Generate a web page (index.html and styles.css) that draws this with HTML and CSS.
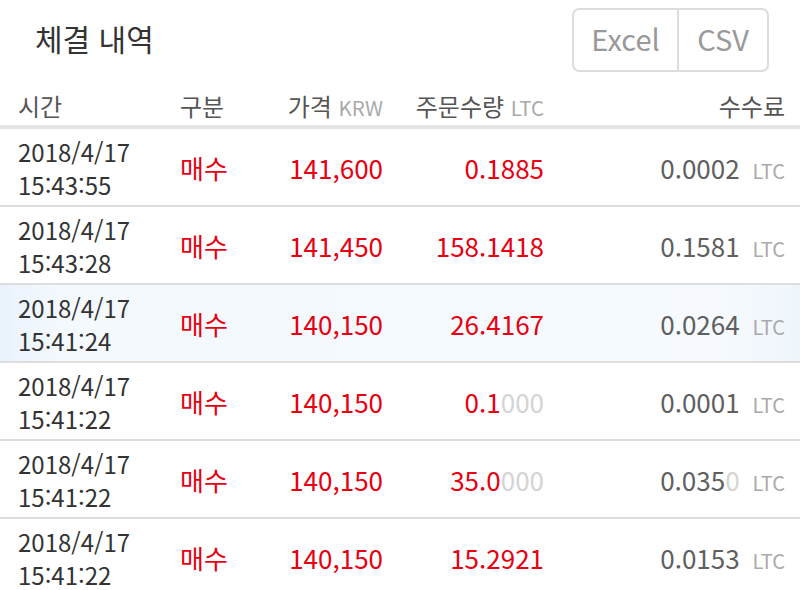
FILE: index.html
```html
<!DOCTYPE html>
<html lang="ko">
<head>
<meta charset="utf-8">
<link rel="stylesheet" href="styles.css">
</head>
<body>
<div class="top">
  <h1 class="title">체결 내역</h1>
  <div class="btns">
    <button class="btn btn-excel">Excel</button>
    <button class="btn btn-csv">CSV</button>
  </div>
</div>
<div class="thead">
  <div class="c1">시간</div>
  <div class="c2">구분</div>
  <div class="c3">가격 <span class="unit">KRW</span></div>
  <div class="c4">주문수량 <span class="unit">LTC</span></div>
  <div class="c5">수수료</div>
</div>
<div class="row">
  <div class="c1 dt">2018/4/17<br>15:43:55</div>
  <div class="c2 red">매수</div>
  <div class="c3 red num">141,600</div>
  <div class="c4 red num">0.1885</div>
  <div class="c5 fee num">0.0002<span class="funit">LTC</span></div>
</div>
<div class="row">
  <div class="c1 dt">2018/4/17<br>15:43:28</div>
  <div class="c2 red">매수</div>
  <div class="c3 red num">141,450</div>
  <div class="c4 red num">158.1418</div>
  <div class="c5 fee num">0.1581<span class="funit">LTC</span></div>
</div>
<div class="row hl">
  <div class="c1 dt">2018/4/17<br>15:41:24</div>
  <div class="c2 red">매수</div>
  <div class="c3 red num">140,150</div>
  <div class="c4 red num">26.4167</div>
  <div class="c5 fee num">0.0264<span class="funit">LTC</span></div>
</div>
<div class="row">
  <div class="c1 dt">2018/4/17<br>15:41:22</div>
  <div class="c2 red">매수</div>
  <div class="c3 red num">140,150</div>
  <div class="c4 red num">0.1<span class="zero">000</span></div>
  <div class="c5 fee num">0.0001<span class="funit">LTC</span></div>
</div>
<div class="row">
  <div class="c1 dt">2018/4/17<br>15:41:22</div>
  <div class="c2 red">매수</div>
  <div class="c3 red num">140,150</div>
  <div class="c4 red num">35.0<span class="zero">000</span></div>
  <div class="c5 fee num">0.035<span class="zero">0</span><span class="funit">LTC</span></div>
</div>
<div class="row">
  <div class="c1 dt">2018/4/17<br>15:41:22</div>
  <div class="c2 red">매수</div>
  <div class="c3 red num">140,150</div>
  <div class="c4 red num">15.2921</div>
  <div class="c5 fee num">0.0153<span class="funit">LTC</span></div>
</div>
</body>
</html>
```
FILE: styles.css
```css
html, body {
  margin: 0;
  padding: 0;
  background: #fff;
}
body {
  width: 800px;
  height: 590px;
  overflow: hidden;
  font-family: "Noto Sans CJK KR", "Noto Sans", sans-serif;
  color: #333;
}
.top {
  display: flex;
  justify-content: space-between;
  align-items: center;
  padding: 8px 31px 0 35px;
  height: 63px;
}
.title {
  margin: 0;
  font-size: 30px;
  font-weight: 400;
  color: #333;
  line-height: 1;
  position: relative;
  top: -2px;
}
.btns {
  display: flex;
  border: 2px solid #dcdcdc;
  border-radius: 7px;
  height: 60px;
  box-sizing: content-box;
}
.btn {
  font-family: inherit;
  font-size: 29px;
  color: #999;
  background: transparent;
  border: 0;
  padding: 0 0 4px;
  margin: 0;
  height: 60px;
  line-height: 56px;
}
.btn-excel {
  width: 105px;
  border-right: 2px solid #dcdcdc;
}
.btn-csv {
  width: 88px;
}
.thead, .row {
  display: grid;
  grid-template-columns: 162px 100px 103px 161px 241px;
  padding: 0 15px 0 18px;
  align-items: center;
}
.thead {
  height: 40px;
  padding-top: 14px;
  border-bottom: 4px solid #e4e4e4;
  font-size: 24px;
  color: #555;
}
.unit {
  font-size: 20.5px;
  color: #aaa;
}
.c3, .c4, .c5 {
  text-align: right;
  white-space: nowrap;
}
.row {
  height: 76px;
  border-bottom: 2px solid #dedede;
}
.row.hl {
  background: linear-gradient(to right, #e9f2fb 0%, #f4f9fe 8%, #f6fafe 90%, #eef5fc 100%);
}
.dt {
  font-size: 24px;
  line-height: 33px;
  color: #333;
  padding-top: 2px;
}
.red {
  color: #e60012;
  font-size: 26px;
}
.num {
  font-size: 26px;
}
.fee {
  color: #5f5f5f;
}
.zero {
  color: #d4d4d4;
}
.funit {
  display: inline-block;
  font-size: 20px;
  color: #aaa;
  margin-left: 13px;
}
```
